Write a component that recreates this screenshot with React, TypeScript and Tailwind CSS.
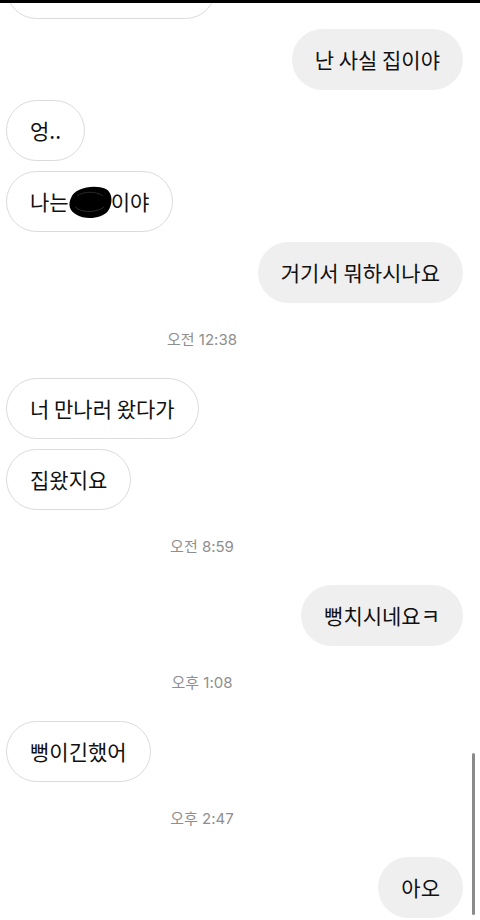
import React from 'react';

type Item =
    | { kind: 'in'; text: React.ReactNode }
    | { kind: 'out'; text: string }
    | { kind: 'time'; text: string };

const items: Item[] = [
    { kind: 'out', text: '난 사실 집이야' },
    { kind: 'in', text: '엉..' },
    {
        kind: 'in',
        text: (
            <>
                나는
                <Scribble />
                이야
            </>
        ),
    },
    { kind: 'out', text: '거기서 뭐하시나요' },
    { kind: 'time', text: '오전 12:38' },
    { kind: 'in', text: '너 만나러 왔다가' },
    { kind: 'in', text: '집왔지요' },
    { kind: 'time', text: '오전 8:59' },
    { kind: 'out', text: '뻥치시네요ㅋ' },
    { kind: 'time', text: '오후 1:08' },
    { kind: 'in', text: '뻥이긴했어' },
    { kind: 'time', text: '오후 2:47' },
    { kind: 'out', text: '아오' },
];

function Scribble(): React.ReactElement {
    return (
        <svg width="48" height="38" viewBox="0 0 48 38" className="inline-block align-middle -mx-[3px] -my-2" aria-hidden>
            <path
                d="M5 15 C8 5 28 1 40 6 C47 10 47 21 42 28 C36 36 19 37 11 32 C3 28 2 21 5 15 Z"
                fill="#000"
            />
            <path d="M11 13 C18 8 30 8 37 13" stroke="#2a2a2a" strokeWidth="1" fill="none" />
            <path d="M9 24 C16 30 30 30 38 24" stroke="#2a2a2a" strokeWidth="1" fill="none" />
        </svg>
    );
}

function Bubble({ item }: { item: Item }): React.ReactElement {
    if (item.kind === 'time') {
        return (
            <div
                className="pt-[17px] pb-[18px] pr-[76px] text-center text-[15px] leading-[20px] text-[#8e8e8e]"
                style={{ fontFamily: 'Inter, "Noto Sans CJK KR", sans-serif' }}
            >
                {item.text}
            </div>
        );
    }
    if (item.kind === 'out') {
        return (
            <div className="flex justify-end pr-[17px]">
                <div className="h-[61px] flex items-center rounded-full bg-[#efefef] px-[23px] text-[21px] text-[#111] whitespace-nowrap">
                    {item.text}
                </div>
            </div>
        );
    }
    return (
        <div className="flex justify-start pl-[6px]">
            <div className="h-[61px] flex items-center rounded-full border border-[#dbdbdb] bg-white px-[23px] text-[21px] text-[#111] whitespace-nowrap">
                {item.text}
            </div>
        </div>
    );
}

export default function App(): React.ReactElement {
    return (
        <div
            className="relative w-[480px] h-[920px] overflow-hidden bg-white"
            style={{ fontFamily: '"Noto Sans CJK KR", "Noto Sans", sans-serif' }}
        >
            <div className="flex flex-col gap-[10px] -mt-[42px]">
                <div className="pl-[6px]">
                    <div className="h-[61px] w-[210px] rounded-full border border-[#dbdbdb] bg-white" />
                </div>
                {items.map((item, i) => (
                    <Bubble key={i} item={item} />
                ))}
            </div>
            <div className="absolute top-0 left-0 right-0 h-[3px] bg-black" />
            <div className="absolute right-[5px] top-[753px] h-[162px] w-[3px] rounded-full bg-[#8a8a8a]" />
        </div>
    );
}
